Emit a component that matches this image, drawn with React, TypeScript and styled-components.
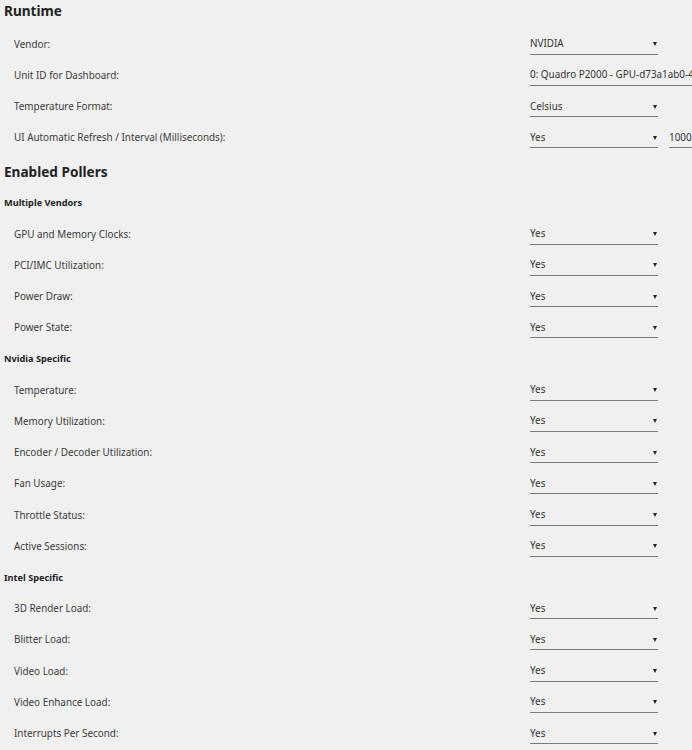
import * as React from 'react';
import styled, { createGlobalStyle } from 'styled-components';

const GlobalStyle = createGlobalStyle`
	html, body {
		margin: 0;
		padding: 0;
		background: #f0f0f0;
		overflow: hidden;
	}
	body {
		font-family: 'Noto Sans', 'Open Sans', sans-serif;
		color: #333;
	}
`;

// flex column so section margins add up instead of collapsing
const Page = styled.div`
	display: flex;
	flex-direction: column;
	padding: 0 0 0 4px;
	width: 900px;
`;

const SectionTitle = styled.h2<{ $first?: boolean }>`
	margin: ${(p) => (p.$first ? '0' : '6px')} 0 6px;
	font-size: 13.6px;
	line-height: 22px;
	font-weight: 700;
	color: #222;
`;

const GroupTitle = styled.h3`
	margin: 7px 0 8px;
	font-size: 9.2px;
	line-height: 14px;
	font-weight: 700;
	color: #222;
`;

const RowList = styled.div`
	display: flex;
	flex-direction: column;
	margin-bottom: 2px;
`;

const Row = styled.div`
	display: grid;
	grid-template-columns: 516px auto;
	align-items: center;
	height: 31.25px;
	padding-left: 10px;
`;

const Label = styled.label`
	font-size: 9.9px;
	color: #3a3a3a;
	white-space: nowrap;
`;

const Controls = styled.div`
	display: flex;
	align-items: center;
	gap: 11px;
`;

const SelectBox = styled.div<{ $width?: number }>`
	box-sizing: border-box;
	display: flex;
	align-items: center;
	justify-content: space-between;
	width: ${(p) => p.$width ?? 128}px;
	height: 22px;
	padding: 0 1px 0 0;
	border-bottom: 1px solid #7a7a7a;
	font-size: 9.9px;
	color: #333;
	white-space: nowrap;
	overflow: hidden;
`;

const Arrow = styled.span`
	display: inline-block;
	margin-top: 2px;
	width: 0;
	height: 0;
	border-left: 2.5px solid transparent;
	border-right: 2.5px solid transparent;
	border-top: 4px solid #222;
`;

const TextField = styled.div`
	box-sizing: border-box;
	display: flex;
	align-items: center;
	width: 120px;
	height: 22px;
	border-bottom: 1px solid #7a7a7a;
	font-size: 9.9px;
	color: #333;
`;

type Setting = { label: string; value: string };

const yes = (label: string): Setting => ({ label, value: 'Yes' });

const groups: { title: string; items: Setting[] }[] = [
	{
		title: 'Multiple Vendors',
		items: [
			yes('GPU and Memory Clocks:'),
			yes('PCI/IMC Utilization:'),
			yes('Power Draw:'),
			yes('Power State:'),
		],
	},
	{
		title: 'Nvidia Specific',
		items: [
			yes('Temperature:'),
			yes('Memory Utilization:'),
			yes('Encoder / Decoder Utilization:'),
			yes('Fan Usage:'),
			yes('Throttle Status:'),
			yes('Active Sessions:'),
		],
	},
	{
		title: 'Intel Specific',
		items: [
			yes('3D Render Load:'),
			yes('Blitter Load:'),
			yes('Video Load:'),
			yes('Video Enhance Load:'),
			yes('Interrupts Per Second:'),
		],
	},
];

const Select = ({ value, width, arrow = true }: { value: string; width?: number; arrow?: boolean }) => (
	<SelectBox $width={width}>
		<span>{value}</span>
		{arrow && <Arrow />}
	</SelectBox>
);

const App: React.FunctionComponent = () => {
	return (
		<>
			<GlobalStyle />
			<Page>
				<SectionTitle $first>Runtime</SectionTitle>
				<RowList>
					<Row>
						<Label>Vendor:</Label>
						<Controls>
							<Select value="NVIDIA" />
						</Controls>
					</Row>
					<Row>
						<Label>Unit ID for Dashboard:</Label>
						<Controls>
							<Select value="0: Quadro P2000 - GPU-d73a1ab0-4b1c-2f7e-9a3d-6c2e1f0b8a57" width={320} arrow={false} />
						</Controls>
					</Row>
					<Row>
						<Label>Temperature Format:</Label>
						<Controls>
							<Select value="Celsius" />
						</Controls>
					</Row>
					<Row>
						<Label>UI Automatic Refresh / Interval (Milliseconds):</Label>
						<Controls>
							<Select value="Yes" />
							<TextField>1000</TextField>
						</Controls>
					</Row>
				</RowList>

				<SectionTitle>Enabled Pollers</SectionTitle>
				{groups.map((g) => (
					<React.Fragment key={g.title}>
						<GroupTitle>{g.title}</GroupTitle>
						<RowList>
							{g.items.map((s) => (
								<Row key={s.label}>
									<Label>{s.label}</Label>
									<Controls>
										<Select value={s.value} />
									</Controls>
								</Row>
							))}
						</RowList>
					</React.Fragment>
				))}
			</Page>
		</>
	);
};

export default App;
